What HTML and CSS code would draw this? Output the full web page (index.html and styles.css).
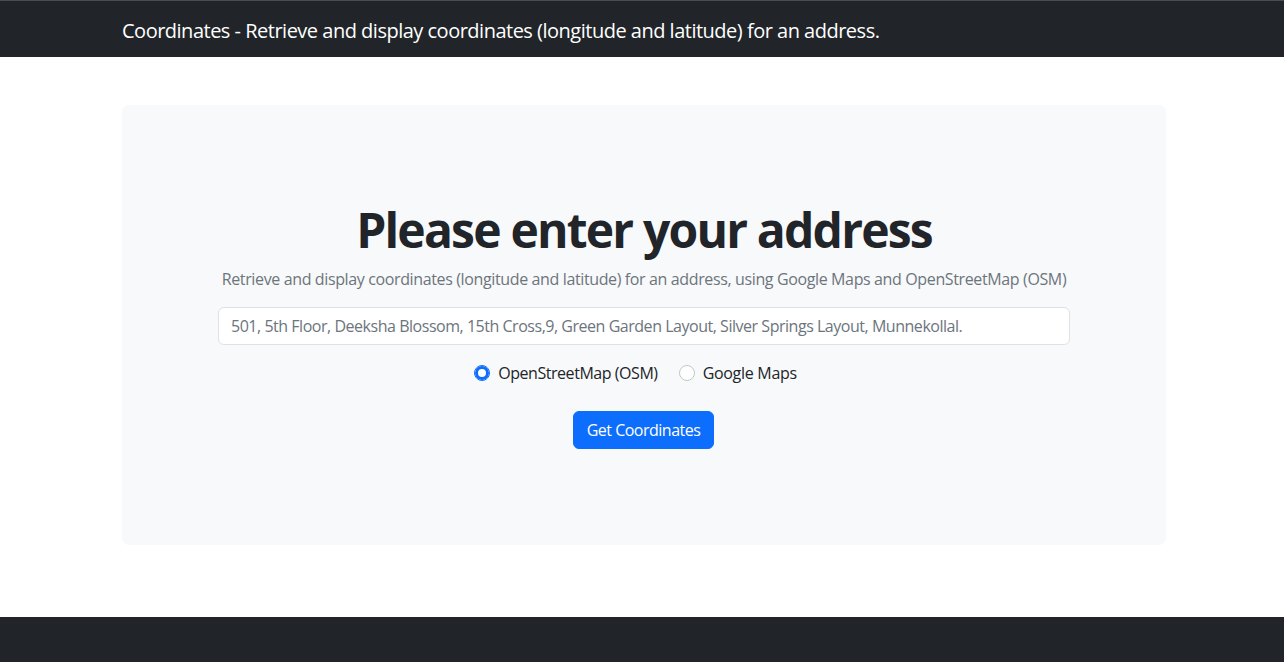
FILE: index.html
```html
<!DOCTYPE html>
<html lang="en">
<head>
<meta charset="utf-8">
<title>Coordinates</title>
<link rel="stylesheet" href="styles.css">
</head>
<body>
<header class="navbar">
  <div class="container">
    <span class="brand">Coordinates - Retrieve and display coordinates (longitude and latitude) for an address.</span>
  </div>
</header>
<main class="container main">
  <section class="jumbo">
    <h1 class="title">Please enter your address</h1>
    <p class="lead">Retrieve and display coordinates (longitude and latitude) for an address, using Google Maps and OpenStreetMap (OSM)</p>
    <form class="form">
      <input class="address" type="text" placeholder="501, 5th Floor, Deeksha Blossom, 15th Cross,9, Green Garden Layout, Silver Springs Layout, Munnekollal.">
      <div class="radios">
        <label class="check"><input class="radio" type="radio" name="src" checked><span>OpenStreetMap (OSM)</span></label>
        <label class="check"><input class="radio" type="radio" name="src"><span class="gm">Google Maps</span></label>
      </div>
      <button class="btn" type="button">Get Coordinates</button>
    </form>
  </section>
</main>
<footer class="footer"></footer>
</body>
</html>
```
FILE: styles.css
```css
* { box-sizing: border-box; }
html, body { margin: 0; padding: 0; }
body {
  font-family: "Open Sans", "Noto Sans", sans-serif;
  font-size: 16px;
  line-height: 1.5;
  letter-spacing: -0.45px;
  color: #212529;
  background: #fff;
  border-top: 1px solid #4a4d51;
}
.container {
  width: 1044px;
  margin-left: calc(50% - 520px);
}
.navbar {
  background: #212529;
  height: 56px;
  display: flex;
  align-items: center;
}
.brand {
  color: #fff;
  font-size: 20px;
  line-height: 30px;
  letter-spacing: -0.5px;
  display: block;
  padding-top: 3px;
}
.main { padding-top: 48px; padding-bottom: 72px; }
.jumbo {
  background: #f8f9fa;
  border-radius: 7px;
  height: 440px;
  display: flex;
  flex-direction: column;
  align-items: center;
  justify-content: center;
  text-align: center;
}
.title {
  margin: 0 0 8px;
  font-size: 48px;
  font-weight: 700;
  line-height: 1.2;
  letter-spacing: -1.8px;
}
.lead {
  margin: 0 0 16px;
  color: #6c757d;
  font-size: 16px;
  letter-spacing: -0.37px;
}
.form {
  display: flex;
  flex-direction: column;
  align-items: center;
}
.address {
  width: 852px;
  height: 38px;
  padding: 6px 12px;
  font: inherit;
  font-size: 16px;
  letter-spacing: -0.47px;
  color: #212529;
  background: #fff;
  border: 1px solid #dee2e6;
  border-radius: 6px;
  outline: none;
}
.address::placeholder { color: #6c757d; }
.radios {
  display: flex;
  gap: 21px;
  margin-top: 16px;
  margin-bottom: 26px;
  padding-right: 17px;
  height: 24px;
  align-items: center;
}
.check {
  display: flex;
  align-items: center;
  gap: 8px;
}
.gm { letter-spacing: -0.3px; }
.radio {
  appearance: none;
  -webkit-appearance: none;
  margin: 0;
  width: 16px;
  height: 16px;
  border-radius: 50%;
  border: 1px solid #c4c6c8;
  background: #fff;
}
.radio:checked {
  border-color: #0d6efd;
  box-shadow: inset 0 0 0 3px #0d6efd;
}
.btn {
  font: inherit;
  font-size: 16px;
  letter-spacing: -0.5px;
  color: #fff;
  background: #0d6efd;
  border: 1px solid #0d6efd;
  border-radius: 6px;
  height: 38px;
  width: 141px;
  padding: 0;
  margin-left: -1px;
}
.footer {
  background: #212529;
  height: 46px;
}
```
